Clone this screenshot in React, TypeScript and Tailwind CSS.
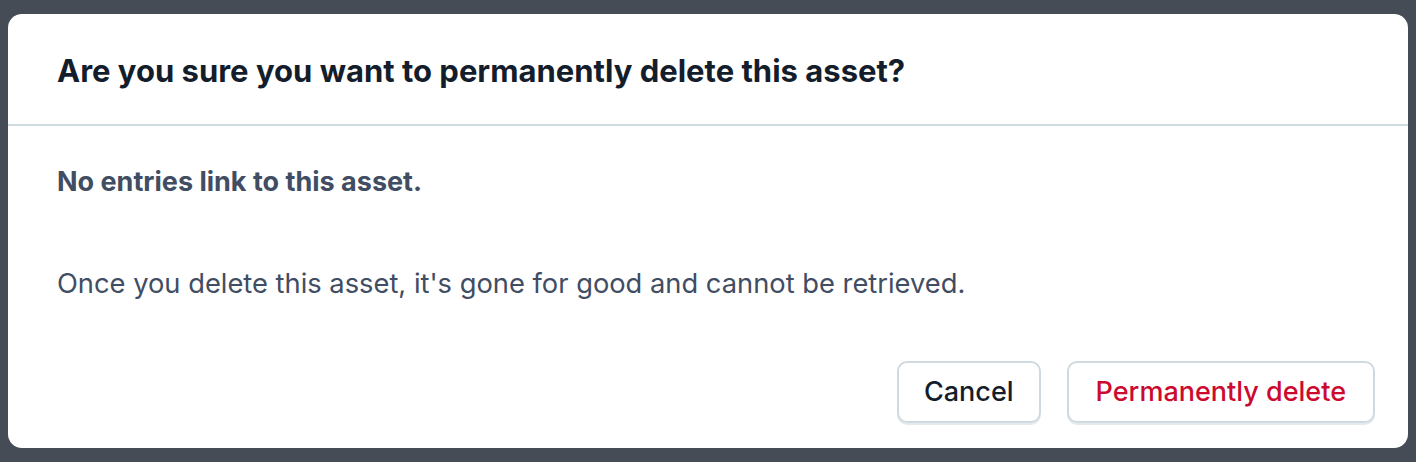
export default function App() {
  return (
    <div
      className="h-[462px] w-[1416px] bg-[#454c55] pt-[14px] pl-[8px]"
      style={{ fontFamily: "Inter, 'Liberation Sans', sans-serif" }}
    >
      <div className="flex h-[434px] w-[1400px] flex-col rounded-[14px] bg-white">
        <div className="flex h-[112px] items-center border-b-2 border-[#cfd9e0] px-[49px] pt-[4px]">
          <h1 className="text-[31px] leading-[40px] font-bold text-[#141d2b]">
            Are you sure you want to permanently delete this asset?
          </h1>
        </div>
        <div className="flex flex-col px-[49px] pt-[38px]">
          <p className="text-[27px] leading-[36px] font-bold text-[#414d63]">No entries link to this asset.</p>
          <p className="mt-[66px] text-[27.3px] leading-[36px] text-[#414d63]">
            Once you delete this asset, it's gone for good and cannot be retrieved.
          </p>
        </div>
        <div className="mt-auto flex justify-end gap-[26px] pr-[33px] pb-[25px]">
          <button className="h-[62px] rounded-[10px] border-2 border-[#cfd9e0] px-[25px] text-[27px] font-medium text-[#141d2b] shadow-[0_2px_0_#e5ebed]">
            Cancel
          </button>
          <button className="h-[62px] rounded-[10px] border-2 border-[#cfd9e0] px-[27px] text-[27px] font-medium text-[#cc0a2f] shadow-[0_2px_0_#e5ebed]">
            Permanently delete
          </button>
        </div>
      </div>
    </div>
  );
}
